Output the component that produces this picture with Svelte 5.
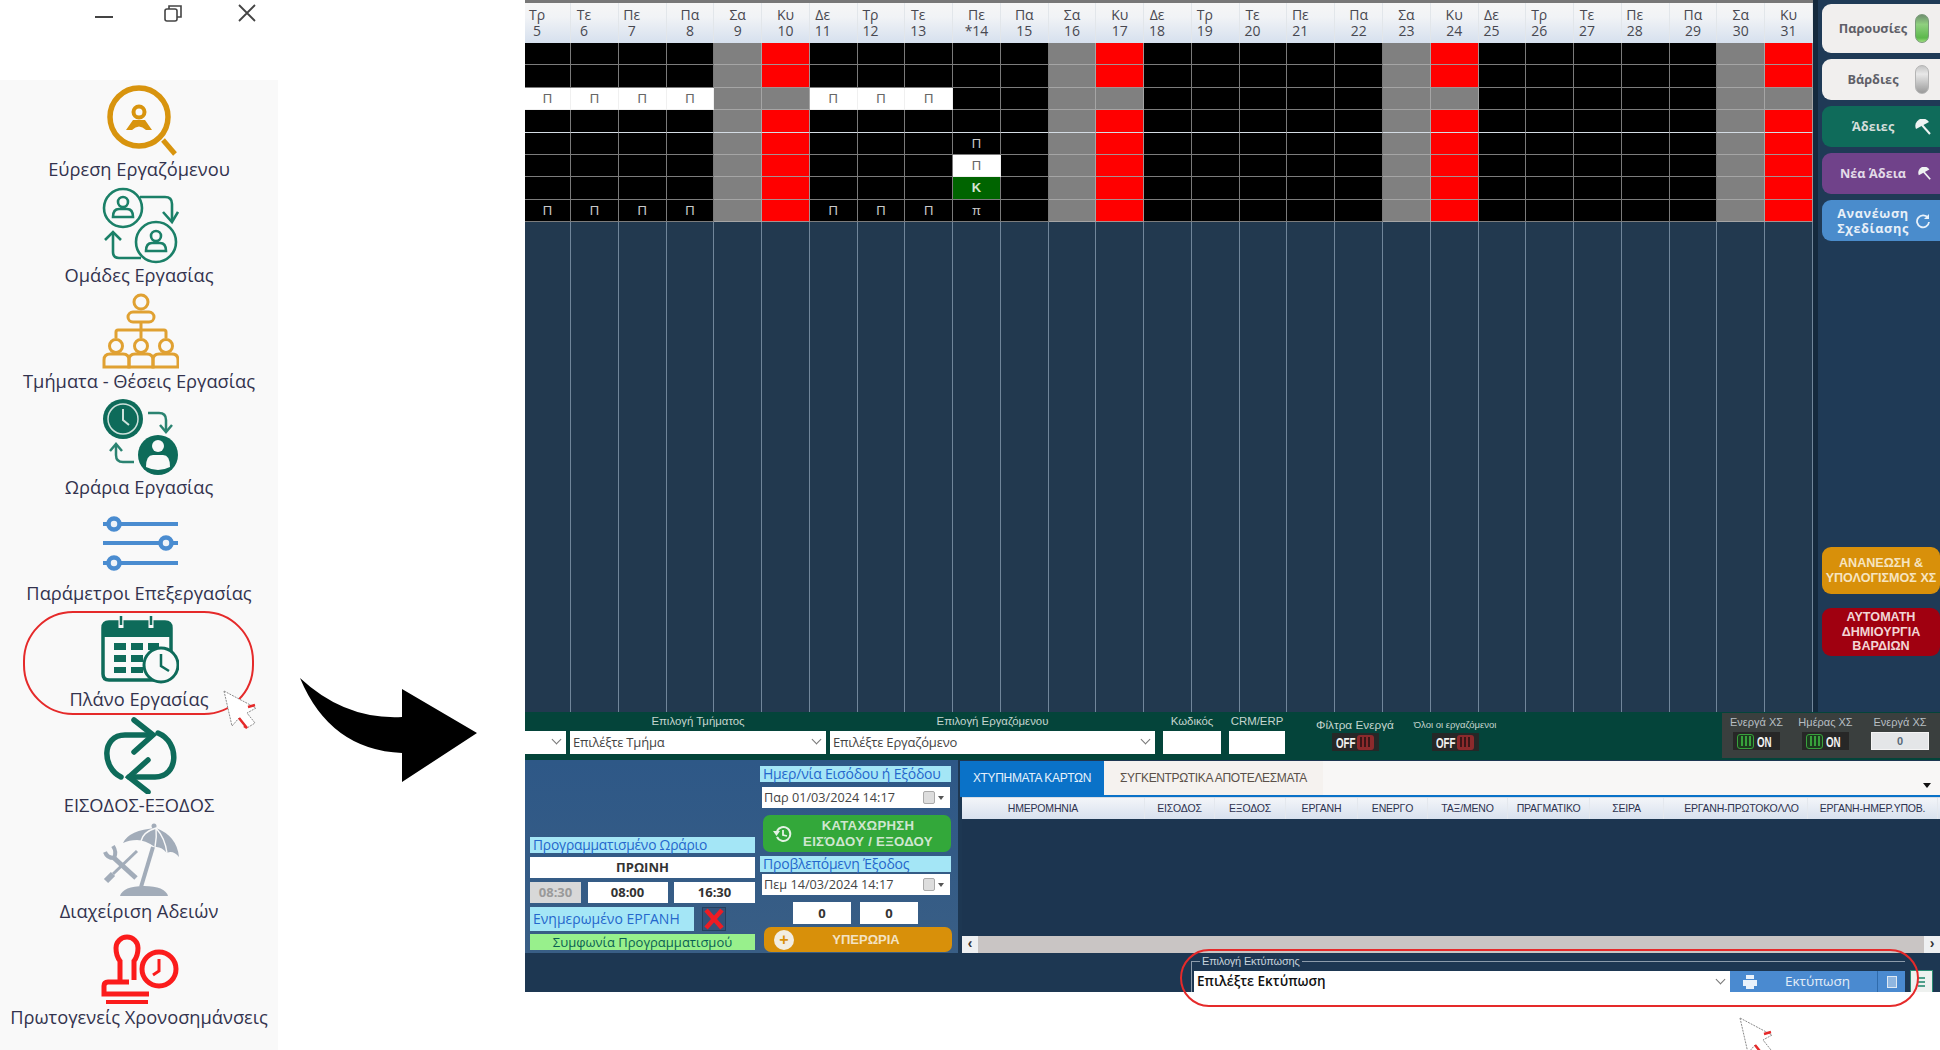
<script lang="ts">
	const menu = [
		'Εύρεση Εργαζόμενου',
		'Ομάδες Εργασίας',
		'Τμήματα - Θέσεις Εργασίας',
		'Ωράρια Εργασίας',
		'Παράμετροι Επεξεργασίας',
		'Πλάνο Εργασίας',
		'ΕΙΣΟΔΟΣ-ΕΞΟΔΟΣ',
		'Διαχείριση Αδειών',
		'Πρωτογενείς Χρονοσημάνσεις'
	];

	const names = ['Τρ', 'Τε', 'Πε', 'Πα', 'Σα', 'Κυ', 'Δε'];
	const days = Array.from({ length: 27 }, (_, i) => ({
		name: names[i % 7],
		num: i + 5,
		label: i + 5 === 14 ? '*14' : String(i + 5)
	}));

	const rows = [0, 1, 2, 3, 4, 5, 6, 7];
	const workDays = [5, 6, 7, 8, 11, 12, 13];

	function cell(row: number, day: { name: string; num: number }) {
		if (day.name === 'Σα') return { cls: 'sat', text: '' };
		if (day.name === 'Κυ') return row === 2 ? { cls: 'sat', text: '' } : { cls: 'sun', text: '' };
		if (workDays.includes(day.num)) {
			if (row === 2) return { cls: 'white', text: 'Π' };
			if (row === 7) return { cls: '', text: 'Π' };
		}
		if (day.num === 14) {
			if (row === 4) return { cls: '', text: 'Π' };
			if (row === 5) return { cls: 'white', text: 'Π' };
			if (row === 6) return { cls: 'green', text: 'Κ' };
			if (row === 7) return { cls: '', text: 'π' };
		}
		return { cls: '', text: '' };
	}

	const columns = [
		'ΗΜΕΡΟΜΗΝΙΑ',
		'ΕΙΣΟΔΟΣ',
		'ΕΞΟΔΟΣ',
		'ΕΡΓΑΝΗ',
		'ΕΝΕΡΓΟ',
		'ΤΑΞ/ΜΕΝΟ',
		'ΠΡΑΓΜΑΤΙΚΟ',
		'ΣΕΙΡΑ',
		'ΕΡΓΑΝΗ-ΠΡΩΤΟΚΟΛΛΟ',
		'ΕΡΓΑΝΗ-ΗΜΕΡ.ΥΠΟΒ.'
	];
</script>

{#snippet toggle(on: boolean)}
	<span class="toggle" class:on>
		{#if on}
			<span class="stripes"><i></i><i></i><i></i></span><b>ON</b>
		{:else}
			<b>OFF</b><span class="stripes"><i></i><i></i><i></i></span>
		{/if}
	</span>
{/snippet}

{#snippet umbrella(size: number)}
	<svg class="umb" viewBox="0 0 16 16" width={size} height={size}>
		<path d="M1 10 A7.4 7.4 0 0 1 14 3 Z" fill="#eef3f2" />
		<path d="M7 6 L15 15" stroke="#eef3f2" stroke-width="2" />
	</svg>
{/snippet}

{#snippet dateField(value: string)}
	<div class="date">
		<span>{value}</span>
		<i class="cal"></i>
		<i class="caret"></i>
	</div>
{/snippet}

{#snippet menuIcon(i: number)}
	<svg viewBox="0 0 80 78" width="80" height="78">
		{#if i === 0}
			<g fill="none" stroke="#d8940e">
				<circle cx="40" cy="37" r="29" stroke-width="5.5" />
				<path d="M64 60 L76 74" stroke-width="5" />
				<circle cx="40" cy="32" r="5.5" stroke-width="4" />
			</g>
			<path d="M27 50 L34 40 L46 40 L53 50 L47 50 Q40 43 33 50 Z" fill="#d8940e" />
		{:else if i === 1}
			<g fill="none" stroke="#1b8068" stroke-width="2.6">
				<circle cx="24" cy="22" r="19" />
				<circle cx="57" cy="56" r="20" />
				<circle cx="24" cy="16" r="5" />
				<path d="M14 31 Q14 23 20 23 L28 23 Q34 23 34 31 Z" />
				<circle cx="57" cy="50" r="5" />
				<path d="M47 65 Q47 57 53 57 L61 57 Q67 57 67 65 Z" />
				<path d="M41 11 L66 11 Q73 11 73 18 L73 34" />
				<path d="M64 26 L73 36 L79 26" />
				<path d="M42 72 L20 72 Q14 72 14 66 L14 48" />
				<path d="M6 54 L14 46 L22 54" />
			</g>
		{:else if i === 2}
			<g fill="none" stroke="#e0a132" stroke-width="3">
				<circle cx="42" cy="10" r="7" />
				<rect x="29" y="20" width="26" height="10" rx="5" />
				<path d="M42 30 V38 M17 46 V40 Q17 38 19 38 L65 38 Q67 38 67 40 V46 M42 38 V46" />
				<circle cx="17" cy="54" r="6.5" />
				<circle cx="42" cy="54" r="6.5" />
				<circle cx="67" cy="54" r="6.5" />
				<path d="M5 75 V68 Q5 62 11 62 L24 62 Q30 62 30 68 V75 Z" />
				<path d="M30 75 V68 Q30 62 36 62 L48 62 Q54 62 54 68 V75 Z" />
				<path d="M54 75 V68 Q54 62 60 62 L73 62 Q79 62 79 68 V75 Z" />
			</g>
		{:else if i === 3}
			<circle cx="24" cy="21" r="20" fill="#0e6b5a" />
			<circle cx="24" cy="21" r="15" fill="none" stroke="#cfe2dc" stroke-width="1.5" />
			<path d="M24 11 V22 L30 27" fill="none" stroke="#cfe2dc" stroke-width="2" />
			<g fill="none" stroke="#2b8371" stroke-width="2.5">
				<path d="M49 15 L60 15 Q67 15 67 22 V33" />
				<path d="M61 27 L67 34 L73 27" />
				<path d="M35 64 L24 64 Q17 64 17 57 V47" />
				<path d="M11 53 L17 46 L23 53" />
			</g>
			<circle cx="59" cy="57" r="20" fill="#0e6b5a" />
			<circle cx="59" cy="48" r="6" fill="#f9f9f9" />
			<path d="M47 69 Q47 57 54 57 L64 57 Q71 57 71 69 Q59 75 47 69 Z" fill="#f9f9f9" />
		{:else if i === 4}
			<g stroke="#4a8cd0" fill="#eef3f8">
				<path d="M4 20 H79 M4 39 H79 M4 59 H79" stroke-width="4" />
				<circle cx="15" cy="20" r="5.5" stroke-width="4.5" />
				<circle cx="67" cy="39" r="5.5" stroke-width="4.5" />
				<circle cx="15" cy="59" r="5.5" stroke-width="4.5" />
			</g>
		{:else if i === 5}
			<path d="M4 18 Q4 12 10 12 H66 Q72 12 72 18 V64 Q72 70 66 70 H10 Q4 70 4 64 Z" fill="none" stroke="#0e6b5a" stroke-width="3.5" />
			<path d="M4 18 Q4 12 10 12 H66 Q72 12 72 18 V27 H4 Z" fill="#0e6b5a" />
			<path d="M22 6 V18 M52 6 V18" stroke="#f9f9f9" stroke-width="5" />
			<path d="M22 6 V15 M52 6 V15" stroke="#0e6b5a" stroke-width="2.5" />
			<g fill="#0e6b5a">
				<rect x="15" y="33" width="12" height="7" />
				<rect x="32" y="33" width="12" height="7" />
				<rect x="49" y="33" width="11" height="7" />
				<rect x="15" y="45" width="12" height="7" />
				<rect x="32" y="45" width="12" height="7" />
				<rect x="15" y="57" width="12" height="6" />
				<rect x="32" y="57" width="12" height="6" />
			</g>
			<circle cx="62" cy="55" r="17" fill="#f9f9f9" stroke="#0e6b5a" stroke-width="3" />
			<path d="M62 44 V56 L70 61" fill="none" stroke="#0e6b5a" stroke-width="2.5" />
		{:else if i === 6}
			<g fill="none" stroke="#0e6b5a" stroke-width="5.5" stroke-linecap="round">
				<path d="M22 61 C3 52 2 19 26 19 L52 19" />
				<path d="M35 4 L54 19 L35 36" />
				<path d="M59 17 C81 26 80 61 56 61 L30 61" />
				<path d="M49 44 L30 61 L49 76" />
			</g>
		{:else if i === 7}
			<circle cx="55" cy="4" r="2.5" fill="#a2acb9" />
			<path d="M24 21 Q30 8 57 6 Q78 14 80 35 Q74 28 68 31 Q62 24 56 25 Q46 18 38 18 Q30 18 24 21 Z" fill="#a2acb9" />
			<path d="M57 6 Q44 10 42 19 M57 6 Q58 15 56 25 M57 6 Q66 16 68 31" fill="none" stroke="#f9f9f9" stroke-width="1.4" />
			<g fill="none" stroke="#a2acb9">
				<path d="M54 25 L42 65" stroke-width="4" />
				<path d="M15 36 L37 56" stroke-width="5" />
				<path d="M6 30 Q8 36 15 36 Q18 30 14 24" stroke-width="4" />
				<path d="M38 29 L14 52" stroke-width="3" />
				<path d="M14 52 L7 59" stroke-width="6" />
			</g>
			<path d="M21 74 Q24 64 45 64 Q66 64 69 74 Z" fill="#a2acb9" />
		{:else}
			<g fill="none" stroke="#fb1c1c" stroke-width="5">
				<path d="M21 53 V33 Q17 28 17 20 A11 11 0 0 1 39 20 Q39 28 35 33 V52" />
				<path d="M30 54 H9 Q5 54 5 58 V66 H50" />
				<path d="M7 74 H49" stroke-width="4" />
				<circle cx="60" cy="41" r="17" />
				<path d="M60 31 V43 L54 47" stroke-width="3" />
			</g>
		{/if}
	</svg>
{/snippet}

{#snippet pointer()}
	<path d="M2 1 L10 36 L17 28 L25 38 L33 33 L25 23 L34 18 Z" fill="#fff" stroke="#8a8a8a" stroke-width="1" stroke-dasharray="2 1" />
	<path d="M17 28 L25 38 L22 36 M26 17 L33 15" fill="none" stroke="#e52a2a" stroke-width="2.5" />
{/snippet}

<div class="page">
	<aside class="side">
		<div class="winbar">
			<svg class="min" viewBox="0 0 18 18" width="18" height="18"><path d="M0 13 H18" stroke="#444" stroke-width="2" /></svg>
			<svg viewBox="0 0 18 18" width="18" height="18">
				<rect x="1" y="5" width="12" height="12" rx="2" fill="none" stroke="#444" stroke-width="1.6" />
				<path d="M5 5 V2 H17 V13 H13" fill="none" stroke="#444" stroke-width="1.6" />
			</svg>
			<svg viewBox="0 0 18 18" width="18" height="18"><path d="M1 1 L17 17 M17 1 L1 17" stroke="#444" stroke-width="1.8" /></svg>
		</div>
		<nav class="menu">
			{#each menu as label, i}
				<div class="item">
					{@render menuIcon(i)}
					<span>{label}</span>
				</div>
			{/each}
		</nav>
	</aside>

	<div class="gutter">
		<svg viewBox="0 0 178 106" width="178" height="106">
			<path d="M0 0 Q45 42 102 39 V11 L177 55 L102 104 V75 Q30 72 0 0 Z" fill="#000" />
		</svg>
	</div>

	<main class="app">
		<section class="top">
			<div class="sched">
				{#each days as d}
					<div class="head" class:shift={['Δε', 'Τρ', 'Τε', 'Πε'].includes(d.name) && d.num !== 14}>
						<span>{d.name}</span><span>{d.label}</span>
					</div>
				{/each}
				{#each rows as r}
					{#each days as d}
						{@const c = cell(r, d)}
						<div class="cell {c.cls}" class:bright={r === 3}>{c.text}</div>
					{/each}
				{/each}
				{#each days as d}
					<div class="fill"></div>
				{/each}
			</div>

			<div class="actions">
				<button class="act light tall"><span>Παρουσίες</span><i class="pill green"></i></button>
				<button class="act light"><span>Βάρδιες</span><i class="pill"></i></button>
				<button class="act teal"><span>Άδειες</span>{@render umbrella(16)}</button>
				<button class="act purple"><span>Νέα Άδεια</span>{@render umbrella(13)}</button>
				<button class="act blue wide">
					<span>Ανανέωση<br />Σχεδίασης</span>
					<svg viewBox="0 0 16 16" width="16" height="16">
						<path d="M13 5 A6 6 0 1 0 14 9" fill="none" stroke="#e8f1fa" stroke-width="1.8" />
						<path d="M14 1 V6 H9 Z" fill="#e8f1fa" />
					</svg>
				</button>
				<button class="act2 orange">ΑΝΑΝΕΩΣΗ &amp;<br />ΥΠΟΛΟΓΙΣΜΟΣ ΧΣ</button>
				<button class="act2 red">ΑΥΤΟΜΑΤΗ<br />ΔΗΜΙΟΥΡΓΙΑ<br />ΒΑΡΔΙΩΝ</button>
			</div>
		</section>

		<section class="filters">
			<div class="sel first"><i class="chev"></i></div>
			<div class="group dept">
				<label for="dept">Επιλογή Τμήματος</label>
				<div class="sel" id="dept">Επιλέξτε Τμήμα<i class="chev"></i></div>
			</div>
			<div class="group emp">
				<label for="emp">Επιλογή Εργαζόμενου</label>
				<div class="sel" id="emp">Επιλέξτε Εργαζόμενο<i class="chev"></i></div>
			</div>
			<div class="group code">
				<label for="code">Κωδικός</label>
				<div class="sel" id="code"></div>
			</div>
			<div class="group crm">
				<label for="crm">CRM/ERP</label>
				<div class="sel" id="crm"></div>
			</div>
			<div class="group flag active-filters">
				<label for="f1">Φίλτρα Ενεργά</label>
				{@render toggle(false)}
			</div>
			<div class="group flag">
				<label class="tiny" for="f2">Όλοι οι εργαζόμενοι</label>
				{@render toggle(false)}
			</div>
			<div class="xs">
				<div class="group"><label for="x1">Ενεργά ΧΣ</label>{@render toggle(true)}</div>
				<div class="group"><label for="x2">Ημέρας ΧΣ</label>{@render toggle(true)}</div>
				<div class="group wide"><label for="x3">Ενεργά ΧΣ</label><div class="xsnum">0</div></div>
			</div>
		</section>

		<section class="lower">
			<div class="leftcol">
				<div class="punch">
					<div class="planned">
						<div class="cap tight">Προγραμματισμένο Ωράριο</div>
						<div class="box shift-name">ΠΡΩΙΝΗ</div>
						<div class="times">
							<div class="box muted">08:30</div>
							<div class="box">08:00</div>
							<div class="box">16:30</div>
						</div>
						<div class="ergani">
							<div class="cap big">Ενημερωμένο ΕΡΓΑΝΗ</div>
							<div class="xbtn">
								<svg viewBox="0 0 24 24" width="24" height="24">
									<path d="M4 3 L20 21 M20 3 L4 21" stroke="#ee1c24" stroke-width="4.5" />
								</svg>
							</div>
						</div>
						<div class="cap ok">Συμφωνία Προγραμματισμού</div>
					</div>
					<div class="entry">
						<div class="cap">Ημερ/νία Εισόδου ή Εξόδου</div>
						{@render dateField('Παρ 01/03/2024 14:17')}
						<button class="save">
							<svg viewBox="0 0 20 20" width="20" height="20">
								<path d="M4 7 A7 7 0 1 1 4 13" fill="none" stroke="#e4f2e4" stroke-width="2" />
								<path d="M0 7 H7 L3.5 12 Z" fill="#e4f2e4" />
								<path d="M10 6 V11 L14 12" fill="none" stroke="#e4f2e4" stroke-width="1.8" />
							</svg>
							<span>ΚΑΤΑΧΩΡΗΣΗ<br />ΕΙΣΌΔΟΥ / ΕΞΟΔΟΥ</span>
						</button>
						<div class="cap exit">Προβλεπόμενη Έξοδος</div>
						{@render dateField('Πεμ 14/03/2024 14:17')}
						<div class="zeros">
							<div class="box">0</div>
							<div class="box">0</div>
						</div>
						<button class="overtime">
							<i class="plus">+</i>
							<span>ΥΠΕΡΩΡΙΑ</span>
						</button>
					</div>
				</div>
			</div>

			<div class="rightcol">
				<div class="tabs">
					<div class="tab active">ΧΤΥΠΗΜΑΤΑ ΚΑΡΤΩΝ</div>
					<div class="tab">ΣΥΓΚΕΝΤΡΩΤΙΚΑ ΑΠΟΤΕΛΕΣΜΑΤΑ</div>
					<i class="tabmenu"></i>
				</div>
				<div class="table">
					<div class="thead">
						{#each columns as col}
							<div>{col}</div>
						{/each}
					</div>
					<div class="tbody"></div>
					<div class="hscroll">
						<span class="arrow">‹</span>
						<span class="track"></span>
						<span class="arrow">›</span>
					</div>
				</div>
				<div class="printrow">
					<fieldset class="printbox">
						<legend>Επιλογή Εκτύπωσης</legend>
						<div class="printsel">Επιλέξτε Εκτύπωση<i class="chev"></i></div>
						<button class="printbtn">
							<svg viewBox="0 0 16 16" width="16" height="16">
								<path d="M4 1 H12 V5 H4 Z M1 6 H15 V12 H12 V15 H4 V12 H1 Z" fill="#eaf2fb" />
							</svg>
							<span>Εκτύπωση</span>
							<em><i></i></em>
						</button>
					</fieldset>
					<div class="listbtn"><i></i><i></i><i></i></div>
				</div>
			</div>
		</section>
	</main>

	<i class="ring plan"></i>
	<i class="ring print"></i>
	<svg class="cursor one" viewBox="0 0 36 40" width="36" height="40">{@render pointer()}</svg>
	<svg class="cursor two" viewBox="0 0 36 40" width="36" height="40">{@render pointer()}</svg>
</div>

<style>
	:global(body) {
		margin: 0;
		background: #fff;
	}

	.page {
		position: relative;
		display: flex;
		width: 1940px;
		height: 1050px;
		overflow: hidden;
		font-family: "Liberation Sans", sans-serif;
	}

	/* launcher column */
	.side {
		width: 278px;
		flex: none;
	}

	.winbar {
		display: flex;
		justify-content: flex-end;
		gap: 56px;
		height: 80px;
		padding: 4px 22px 0 0;
		box-sizing: border-box;
		background: #fff;
	}

	.winbar .min {
		margin-right: -5px;
	}

	.menu {
		height: 970px;
		background: #f9f9f9;
	}

	.item {
		display: flex;
		flex-direction: column;
		align-items: center;
		height: 106px;
	}

	.item svg {
		flex: none;
	}

	.item span {
		font: 400 18.3px/22px "Open Sans", sans-serif;
		color: #33334e;
		white-space: nowrap;
	}

	.gutter {
		width: 247px;
		flex: none;
		padding: 678px 0 0 22px;
		box-sizing: border-box;
	}

	/* application window */
	.app {
		width: 1415px;
		height: 992px;
		flex: none;
		display: flex;
		flex-direction: column;
		background: #1d3752;
	}

	.top {
		display: flex;
		height: 712px;
		flex: none;
	}

	.sched {
		width: 1288px;
		flex: none;
		display: grid;
		grid-template-columns: 46px repeat(26, 47.77px);
		grid-template-rows: 40px repeat(8, 22.4px) 1fr;
		border-top: 3px solid #777;
		box-sizing: border-box;
		background: #22394f;
	}

	.head {
		display: flex;
		flex-direction: column;
		align-items: center;
		justify-content: center;
		background: linear-gradient(#f6f6f6, #f1f3f6 35%, #d6e0ee);
		border-right: 1px solid #e2e6ea;
		font: 14px/16px "Open Sans", sans-serif;
		color: #484850;
	}

	.head.shift {
		padding-right: 21px;
	}

	.cell {
		background: #000;
		border-right: 1px solid #7a7a7a;
		border-bottom: 1px solid #7c7c7c;
		color: #c9c9c9;
		font: 13px/21px "Liberation Sans", sans-serif;
		text-align: center;
	}

	.cell.sat {
		background: #808080;
		border-color: #a5a5a5;
	}

	.cell.sun {
		background: #ff0000;
		border-color: #a89090;
	}

	.cell.white {
		background: #fff;
		border-color: #f0f0f0;
		color: #666;
	}

	.cell.green {
		background: #006400;
		color: #d4e4d4;
		font-weight: 700;
	}

	.cell.bright {
		border-bottom-color: #d4dce4;
	}

	.fill {
		border-right: 1px solid #71869a;
	}

	.actions {
		width: 127px;
		flex: none;
		box-sizing: border-box;
		padding: 4px 0 0 4px;
		border-left: 5px solid #14293d;
		background: #1f3a56;
		overflow: hidden;
	}

	.act,
	.act2 {
		display: flex;
		align-items: center;
		width: 128px;
		height: 41px;
		padding: 0;
		margin: 0 0 6px;
		border: 0;
		border-radius: 9px;
		font: 700 12.7px/15px "Open Sans", sans-serif;
	}

	.act span {
		width: 102px;
		text-align: center;
		flex: none;
	}

	.light {
		background: #f1efee;
		color: #5f5f68;
	}

	.tall {
		height: 49px;
	}

	.teal {
		background: #0f6b5a;
		color: #d4dedb;
	}

	.purple {
		background: #70428a;
		color: #e3dbe8;
	}

	.blue {
		background: #4a8ccc;
		color: #e8f0f8;
	}

	.blue span {
		letter-spacing: 0.6px;
	}

	.pill {
		width: 14px;
		height: 29px;
		margin-left: -9px;
		border-radius: 7px;
		border: 1px solid #b4b4b4;
		background: linear-gradient(#c4c4c4, #e8e8e8 30%, #9a9a9a);
		box-sizing: border-box;
	}

	.pill.green {
		border-color: #7a9a7a;
		background: linear-gradient(#6f8f6f, #8fd07f 35%, #5cb84c 85%, #9fe07f);
	}

	.act svg {
		margin-left: -9px;
	}

	.purple svg {
		margin-left: -6px;
	}

	.act2 {
		justify-content: center;
		width: 118px;
		font: 700 12.6px/14.5px "Liberation Sans", sans-serif;
		text-align: center;
	}

	.orange {
		height: 47px;
		margin: 306px 0 14px;
		background: #d8900a;
		color: #f6e4c0;
	}

	.red {
		height: 48px;
		margin: 0;
		background: #a00010;
		color: #f2d5d5;
	}

	/* filter bar */
	.filters {
		display: flex;
		align-items: flex-end;
		height: 48px;
		flex: none;
		padding-bottom: 6px;
		box-sizing: border-box;
		background: #04443a;
	}

	.group {
		display: flex;
		flex-direction: column;
		align-items: center;
		flex: none;
	}

	.group label {
		font: 11.4px/14px "Liberation Sans", sans-serif;
		color: #c5d5cf;
		white-space: nowrap;
		margin-bottom: 3px;
	}

	.group label.tiny {
		font-size: 9.5px;
	}

	.sel {
		position: relative;
		box-sizing: border-box;
		width: 100%;
		height: 23px;
		padding-left: 3px;
		background: #fff;
		font: 13px/22px "Open Sans", sans-serif;
		letter-spacing: -0.2px;
		color: #444;
		white-space: nowrap;
	}

	.sel.first {
		width: 41px;
		flex: none;
	}

	.chev {
		position: absolute;
		right: 6px;
		top: 5px;
		width: 6px;
		height: 6px;
		border-right: 1.2px solid #777;
		border-bottom: 1.2px solid #777;
		transform: rotate(45deg);
	}

	.dept {
		width: 256px;
		margin-left: 4px;
	}

	.emp {
		width: 325px;
		margin-left: 4px;
	}

	.code {
		width: 58px;
		margin-left: 8px;
	}

	.crm {
		width: 56px;
		margin-left: 8px;
	}

	.flag {
		width: 100px;
		margin-bottom: 3px;
	}

	.active-filters {
		margin-left: 20px;
	}

	.flag label {
		margin-bottom: 1px;
		font-size: 11.8px;
	}

	.toggle {
		display: flex;
		align-items: center;
		gap: 3px;
		width: 47px;
		height: 18px;
		padding: 0 4px;
		box-sizing: border-box;
		background: #272727;
		color: #f2f2f2;
		font-family: "Liberation Sans", sans-serif;
	}

	.toggle b {
		font-size: 15px;
		transform: scaleX(0.65);
		transform-origin: left;
		width: 18px;
		flex: none;
	}

	.stripes {
		display: flex;
		justify-content: center;
		align-items: center;
		gap: 2px;
		width: 17px;
		height: 15px;
		flex: none;
		border-radius: 3px;
		background: #8c2a2c;
	}

	.stripes i {
		width: 2px;
		height: 10px;
		background: #3c1618;
	}

	.on .stripes {
		background: #1d3a1f;
		border: 1.5px solid #38a23c;
		box-sizing: border-box;
	}

	.on .stripes i {
		background: #38a23c;
	}

	.on b {
		width: 14px;
	}

	.xs {
		display: flex;
		align-items: flex-start;
		gap: 22px;
		align-self: flex-start;
		width: 218px;
		height: 45px;
		margin: 1px 0 0 auto;
		padding: 2px 0 0 11px;
		box-sizing: border-box;
		background: #3a3f3e;
		flex: none;
	}

	.xs .group {
		width: 47px;
	}

	.xs .group.wide {
		width: 58px;
	}

	.xs .group label {
		color: #b7bec2;
		font-size: 11px;
	}

	.xsnum {
		width: 58px;
		height: 18px;
		background: #e4e6e8;
		border: 1px solid #f4f4f4;
		box-sizing: border-box;
		color: #5a6a7a;
		font: 700 11px/16px "Liberation Sans", sans-serif;
		text-align: center;
	}

	/* lower part */
	.lower {
		display: flex;
		height: 232px;
		flex: none;
	}

	.leftcol {
		width: 433px;
		flex: none;
	}

	.punch {
		display: flex;
		align-items: flex-end;
		gap: 5px;
		height: 193px;
		padding: 6px 4px 1px 5px;
		box-sizing: border-box;
		background: linear-gradient(#2e5887, #395e85);
	}

	.planned {
		width: 225px;
		flex: none;
		display: flex;
		flex-direction: column;
		margin-bottom: 2px;
	}

	.entry {
		width: 191px;
		flex: none;
		display: flex;
		flex-direction: column;
	}

	.cap {
		height: 16px;
		padding-left: 3px;
		background: #a4e6f6;
		color: #2467cc;
		font: 14px/16px "Open Sans", sans-serif;
		white-space: nowrap;
		letter-spacing: -0.2px;
	}

	.cap.tight {
		font-size: 13.8px;
	}

	.cap.big {
		width: 164px;
		height: 24px;
		line-height: 24px;
		font-size: 14px;
		letter-spacing: 0;
		box-sizing: border-box;
	}

	.cap.ok {
		margin-top: 3px;
		background: #98f08c;
		color: #0a5f52;
		text-align: center;
		font-size: 13px;
		font-weight: 500;
		padding-left: 0;
		letter-spacing: 0;
	}

	.cap.exit {
		margin: 4px 0 -3px;
	}

	.box {
		height: 21px;
		background: #fff;
		color: #333;
		font: 700 13px/21px "Open Sans", sans-serif;
		text-align: center;
	}

	.shift-name {
		margin-top: 4px;
	}

	.times {
		display: grid;
		grid-template-columns: 51px 80px 81px;
		justify-content: space-between;
		margin-top: 4px;
	}

	.muted {
		background: #d8d8d8;
		color: #9a9a9a;
	}

	.ergani {
		display: flex;
		align-items: center;
		gap: 8px;
		margin-top: 4px;
	}

	.xbtn {
		width: 24px;
		height: 24px;
		background: #34527a;
		border: 1px solid #25405f;
		box-sizing: border-box;
	}

	.xbtn svg {
		display: block;
		margin: -1px;
	}

	.date {
		display: flex;
		align-items: center;
		height: 21px;
		margin: 5px 1px 0 2px;
		padding: 0 6px 0 2px;
		background: #fff;
		color: #444;
		font: 12.7px/21px "Open Sans", sans-serif;
	}

	.date span {
		flex: 1;
		white-space: nowrap;
	}

	.cal {
		width: 10px;
		height: 11px;
		border: 1px solid #aaa;
		border-radius: 2px;
		background: #ddd;
	}

	.caret {
		width: 0;
		height: 0;
		margin-left: 3px;
		border: 3.5px solid transparent;
		border-top: 4px solid #555;
		border-bottom: 0;
	}

	.save {
		display: flex;
		align-items: center;
		height: 37px;
		margin: 7px 0 0 3px;
		padding: 0 0 0 10px;
		border: 0;
		border-radius: 7px;
		background: #33a83a;
		color: #cfe6d0;
		font: 700 13.2px/16px "Liberation Sans", sans-serif;
		letter-spacing: 0.3px;
	}

	.save span {
		flex: 1;
		text-align: center;
		padding-right: 8px;
	}

	.zeros {
		display: flex;
		gap: 9px;
		justify-content: center;
		margin: 7px 0 3px;
	}

	.zeros .box {
		width: 58px;
		height: 22px;
		line-height: 22px;
	}

	.overtime {
		display: flex;
		align-items: center;
		height: 25px;
		margin-left: 4px;
		width: 188px;
		padding: 0 0 0 10px;
		border: 0;
		border-radius: 7px;
		background: #d8900a;
		color: #f3e2c3;
		font: 700 13px/16px "Liberation Sans", sans-serif;
	}

	.overtime span {
		flex: 1;
		text-align: center;
		padding-right: 14px;
	}

	.plus {
		width: 20px;
		height: 20px;
		border-radius: 50%;
		background: #f2ede2;
		color: #d8900a;
		font: 700 16px/20px "Liberation Sans", sans-serif;
	}

	.rightcol {
		flex: 1;
		min-width: 0;
		display: flex;
		flex-direction: column;
		padding-left: 2px;
	}

	.tabs {
		position: relative;
		display: flex;
		height: 34px;
		margin-top: 1px;
		background: #f8f7f6;
		border-bottom: 2px solid #0a72c8;
		box-sizing: content-box;
		font: 12px/34px "Liberation Sans", sans-serif;
		letter-spacing: -0.35px;
	}

	.tab {
		padding: 0 16px;
		color: #5a5048;
		background: #f5f2ef;
	}

	.tab.active {
		width: 144px;
		box-sizing: border-box;
		padding: 0;
		text-align: center;
		background: #0a72c8;
		color: #e6f1fb;
	}

	.tabmenu {
		position: absolute;
		right: 9px;
		bottom: 7px;
		border: 4px solid transparent;
		border-top: 5px solid #111;
		border-bottom: 0;
	}

	.table {
		height: 155px;
		margin-left: 2px;
		border-top: 1px solid #d8dde4;
		display: flex;
		flex-direction: column;
	}

	.thead {
		display: grid;
		grid-template-columns: 183px 70px 71px 72px 70px 80px 82px 74px 144px 130px;
		height: 21px;
		flex: none;
		background: linear-gradient(#f3f5f9, #d8e1ee);
		font: 10.5px/21px "Liberation Sans", sans-serif;
		color: #2e3350;
		text-align: center;
		letter-spacing: -0.2px;
	}

	.thead div {
		border-right: 1px solid #e4e8ee;
		white-space: nowrap;
		overflow: hidden;
	}

	.thead div:first-child {
		padding-right: 20px;
	}

	.thead div:nth-child(9) {
		padding-left: 12px;
	}

	.tbody {
		flex: 1;
		background: #1c3550;
	}

	.hscroll {
		display: flex;
		height: 17px;
		flex: none;
		background: #c9c5c4;
	}

	.track {
		flex: 1;
	}

	.arrow {
		width: 16px;
		background: #eef0f2;
		color: #333;
		font: 700 14px/15px "Liberation Sans", sans-serif;
		text-align: center;
	}

	.printrow {
		flex: 1;
		display: flex;
		align-items: flex-end;
		gap: 5px;
		padding-left: 231px;
	}

	.printbox {
		display: flex;
		width: 714px;
		height: 36px;
		margin: 0;
		padding: 0 0 0 2px;
		box-sizing: border-box;
		border: 1px solid #8d9cab;
		border-bottom: 0;
		border-right: 0;
		min-width: 0;
	}

	.printbox legend {
		padding: 0 2px;
		margin-left: 6px;
		font: 11px/11px "Liberation Sans", sans-serif;
		color: #c6d2dc;
		letter-spacing: -0.2px;
	}

	.printsel {
		position: relative;
		width: 536px;
		height: 21px;
		padding-left: 3px;
		box-sizing: border-box;
		background: #fff;
		color: #111;
		font: 600 13.5px/21px "Open Sans", sans-serif;
		align-self: flex-end;
	}

	.printbtn {
		display: flex;
		align-items: center;
		width: 175px;
		height: 21px;
		padding: 0 0 0 12px;
		border: 0;
		background: #4a8ad0;
		color: #e4eef8;
		font: 13.5px/21px "Open Sans", sans-serif;
		align-self: flex-end;
	}

	.printbtn span {
		flex: 1;
		text-align: center;
	}

	.printbtn em {
		display: flex;
		align-items: center;
		justify-content: center;
		width: 27px;
		height: 21px;
		border-left: 1px solid #2f6bab;
	}

	.printbtn em i {
		width: 8px;
		height: 10px;
		border: 1px solid #dfe9f3;
		background: #8fb6e0;
	}

	.listbtn {
		display: flex;
		flex-direction: column;
		justify-content: center;
		gap: 2px;
		width: 23px;
		height: 22px;
		box-sizing: border-box;
		padding: 0 7px;
		background: #eef1ef;
		border: 1px solid #2c8c74;
		border-bottom: 0;
	}

	.listbtn i {
		height: 2px;
		background: #4f9f8a;
	}

	/* annotations drawn on top of the capture */
	.ring {
		position: absolute;
		border: 2.5px solid #e52a2a;
		box-sizing: border-box;
	}

	.ring.plan {
		left: 23px;
		top: 611px;
		width: 231px;
		height: 104px;
		border-radius: 50px;
	}

	.ring.print {
		left: 1180px;
		top: 949px;
		width: 739px;
		height: 58px;
		border-radius: 29px;
	}

	.cursor {
		position: absolute;
	}

	.cursor.one {
		left: 222px;
		top: 690px;
	}

	.cursor.two {
		left: 1738px;
		top: 1017px;
	}
</style>
